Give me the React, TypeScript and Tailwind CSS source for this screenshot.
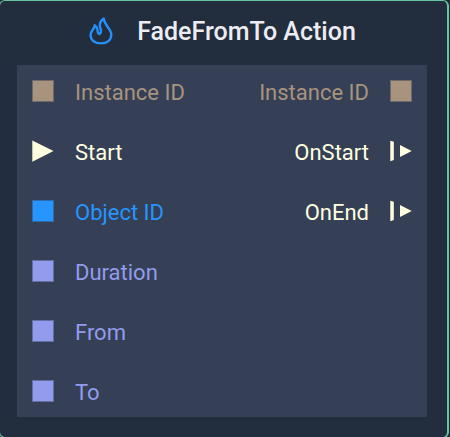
import React from "react";

type PortShape = "square" | "input-flow" | "output-flow";

interface Port {
  label: string;
  shape: PortShape;
  color: string;
}

const inputs: Port[] = [
  { label: "Instance ID", shape: "square", color: "text-[#a8937e]" },
  { label: "Start", shape: "input-flow", color: "text-[#ffffe0]" },
  { label: "Object ID", shape: "square", color: "text-[#2695ff]" },
  { label: "Duration", shape: "square", color: "text-[#929bed]" },
  { label: "From", shape: "square", color: "text-[#929bed]" },
  { label: "To", shape: "square", color: "text-[#929bed]" },
];

const outputs: Port[] = [
  { label: "Instance ID", shape: "square", color: "text-[#a8937e]" },
  { label: "OnStart", shape: "output-flow", color: "text-[#ffffe0]" },
  { label: "OnEnd", shape: "output-flow", color: "text-[#ffffe0]" },
];

function PortIcon({ shape }: { shape: PortShape }) {
  return (
    <svg viewBox="0 0 22 22" className="size-[22px] shrink-0 fill-current" aria-hidden="true">
      {shape === "square" && (
        <>
          <rect width="22" height="22" opacity="0.5" />
          <rect x="1" y="1" width="20" height="20" />
        </>
      )}
      {shape === "input-flow" && <path d="M0.3 0.5 21.5 11 0.3 21.7Z" />}
      {shape === "output-flow" && (
        <>
          <path d="M0.3 0.7 3.8 1.7V20L0.3 21.2Z" />
          <path d="M10 5 21.7 11 10 17Z" />
        </>
      )}
    </svg>
  );
}

function FlameIcon() {
  return (
    <svg
      viewBox="0 1 24 30"
      className="h-[30px] w-6 shrink-0 fill-none stroke-[#2491fb]"
      strokeWidth="2.4"
      strokeLinejoin="round"
      strokeLinecap="round"
      aria-hidden="true"
    >
      <path d="M14.7 2.5C11 5 9.8 8.8 11.8 13.5C12.2 15.6 11.5 17.6 10.3 18C8.9 18 8.6 16 8.5 14C8.3 12 7.4 10.4 5.8 9.3C5.5 13 1.6 14.4 1.6 19.1C1.6 24.4 6 27.4 12 27.4C18 27.4 22.3 24 22.3 18.2C22.3 13.2 15.8 9.8 14.7 2.5Z" />
    </svg>
  );
}

export default function App() {
  return (
    <main className="overflow-hidden bg-[#202a38] pr-px font-['Roboto',sans-serif]">
      <article className="-mb-px -ml-px rounded-md border border-r-2 border-[#68c3a0] bg-[#222d3d] px-4 pb-5 pr-5">
        <header className="flex h-16 items-center justify-center gap-6 pb-0.5 pl-0.5 text-[#ececf2]">
          <FlameIcon />
          <h1 className="whitespace-nowrap text-[25px] font-medium leading-8">FadeFromTo Action</h1>
        </header>
        <section className="ml-px flex justify-between bg-[#354056] px-[15px] py-[11px] text-[22px] leading-[26px]">
          <ul className="flex flex-col gap-[30px]">
            {inputs.map((port) => (
              <li key={port.label} className={`flex items-center gap-[21px] ${port.color}`}>
                <PortIcon shape={port.shape} />
                <span className="pt-1">{port.label}</span>
              </li>
            ))}
          </ul>
          <ul className="flex flex-col gap-[30px]">
            {outputs.map((port) => (
              <li key={port.label} className={`flex items-center justify-end gap-[21px] ${port.color}`}>
                <span className="pt-1">{port.label}</span>
                <PortIcon shape={port.shape} />
              </li>
            ))}
          </ul>
        </section>
      </article>
    </main>
  );
}
